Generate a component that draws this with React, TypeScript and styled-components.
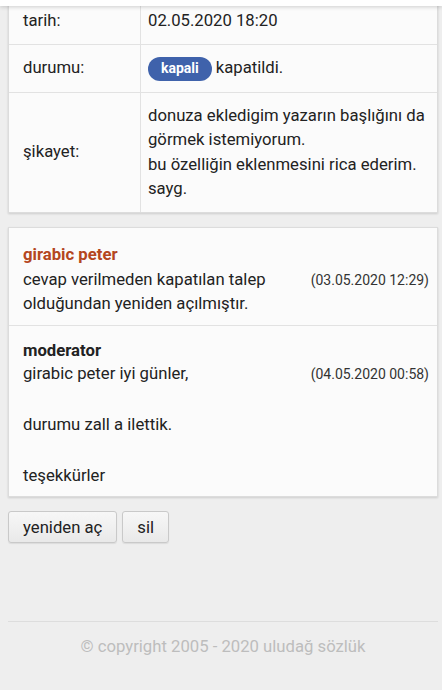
import React from 'react';
import styled, { createGlobalStyle } from 'styled-components';

const GlobalStyle = createGlobalStyle`
  html, body {
    margin: 0;
    padding: 0;
    background: #eeeeee;
    font-family: Roboto, "Noto Sans", Arial, sans-serif;
    color: #222;
    overflow: hidden;
  }
`;

const TopBar = styled.div`
  position: fixed;
  top: 0;
  left: 0;
  right: 0;
  height: 6px;
  background: #fff;
  box-shadow: 0 1px 4px rgba(0, 0, 0, 0.18);
  z-index: 2;
`;

const Page = styled.div`
  padding: 0 4px 0 8px;
  margin-top: -3px;
  font-size: 16.7px;
`;

const Card = styled.div`
  background: #fbfbfb;
  border: 1px solid #dcdcdc;
  box-shadow: 0 1px 2px rgba(0, 0, 0, 0.14);
`;

const InfoTable = styled.div`
  display: grid;
  grid-template-columns: 132px 1fr;
`;

const Label = styled.div<{ $last?: boolean }>`
  display: flex;
  align-items: center;
  padding: 11px 14px;
  line-height: 24.4px;
  border-right: 1px solid #e2e2e2;
  border-bottom: ${(p) => (p.$last ? 'none' : '1px solid #e2e2e2')};
`;

const Value = styled.div<{ $last?: boolean }>`
  display: flex;
  align-items: center;
  padding: 11px 8px 11px 7px;
  line-height: 24.4px;
  border-bottom: ${(p) => (p.$last ? 'none' : '1px solid #e2e2e2')};
`;

const Pill = styled.span`
  display: inline-flex;
  align-items: center;
  height: 24px;
  padding: 0 13px;
  margin-right: 4px;
  border-radius: 12px;
  background: #3f62ab;
  color: #fff;
  font-size: 14px;
  font-weight: 700;
`;

const MessageCard = styled(Card)`
  margin-top: 14px;
`;

const Message = styled.div<{ $first?: boolean }>`
  padding: ${(p) => (p.$first ? '16px 8px 9px 14px' : '14px 8px 8px 14px')};
  border-top: ${(p) => (p.$first ? 'none' : '1px solid #e2e2e2')};
`;

const Author = styled.div<{ $color: string; $gap: number }>`
  font-weight: 700;
  line-height: 22px;
  margin-bottom: ${(p) => p.$gap}px;
  color: ${(p) => p.$color};
`;

const Paragraph = styled.div`
  line-height: 24px;

  & + & {
    margin-top: 27px;
  }
`;

const Stamp = styled.span`
  float: right;
  margin-left: 12px;
  font-size: 14px;
  color: #333;
`;

const Actions = styled.div`
  display: flex;
  gap: 5px;
  margin-top: 14px;
`;

const Button = styled.button`
  height: 32px;
  padding: 0 14px;
  font-family: inherit;
  font-size: 16.7px;
  color: #222;
  background: linear-gradient(#f7f7f7, #e9e9e9);
  border: 1px solid #c9c9c9;
  border-radius: 3px;
  box-shadow: 0 1px 1px rgba(0, 0, 0, 0.08);
`;

const Footer = styled.div`
  margin-top: 78px;
  border-top: 1px solid #dddddd;
  padding-top: 14px;
  text-align: center;
  line-height: 22px;
  color: #bdbdbd;
`;

const messages = [
  {
    author: 'girabic peter',
    color: '#b4461e',
    date: '(03.05.2020 12:29)',
    text: ['cevap verilmeden kapatılan talep olduğundan yeniden açılmıştır.'],
  },
  {
    author: 'moderator',
    color: '#222',
    date: '(04.05.2020 00:58)',
    text: ['girabic peter iyi günler,', 'durumu zall a ilettik.', 'teşekkürler'],
  },
];

export default function App() {
  return (
    <>
      <GlobalStyle />
      <TopBar />
      <Page>
        <Card>
          <InfoTable>
            <Label>tarih:</Label>
            <Value>02.05.2020 18:20</Value>
            <Label>durumu:</Label>
            <Value>
              <Pill>kapali</Pill>kapatildi.
            </Value>
            <Label $last>şikayet:</Label>
            <Value $last>
              <span>
                donuza ekledigim yazarın başlığını da görmek istemiyorum.
                <br />
                bu özelliğin eklenmesini rica ederim.
                <br />
                sayg.
              </span>
            </Value>
          </InfoTable>
        </Card>

        <MessageCard>
          {messages.map((m, i) => (
            <Message key={m.author} $first={i === 0}>
              <Author $color={m.color} $gap={i === 0 ? 2 : 0}>
                {m.author}
              </Author>
              {m.text.map((t, j) => (
                <Paragraph key={j}>
                  {j === 0 && <Stamp>{m.date}</Stamp>}
                  {t}
                </Paragraph>
              ))}
            </Message>
          ))}
        </MessageCard>

        <Actions>
          <Button>yeniden aç</Button>
          <Button>sil</Button>
        </Actions>

        <Footer>© copyright 2005 - 2020 uludağ sözlük</Footer>
      </Page>
    </>
  );
}
